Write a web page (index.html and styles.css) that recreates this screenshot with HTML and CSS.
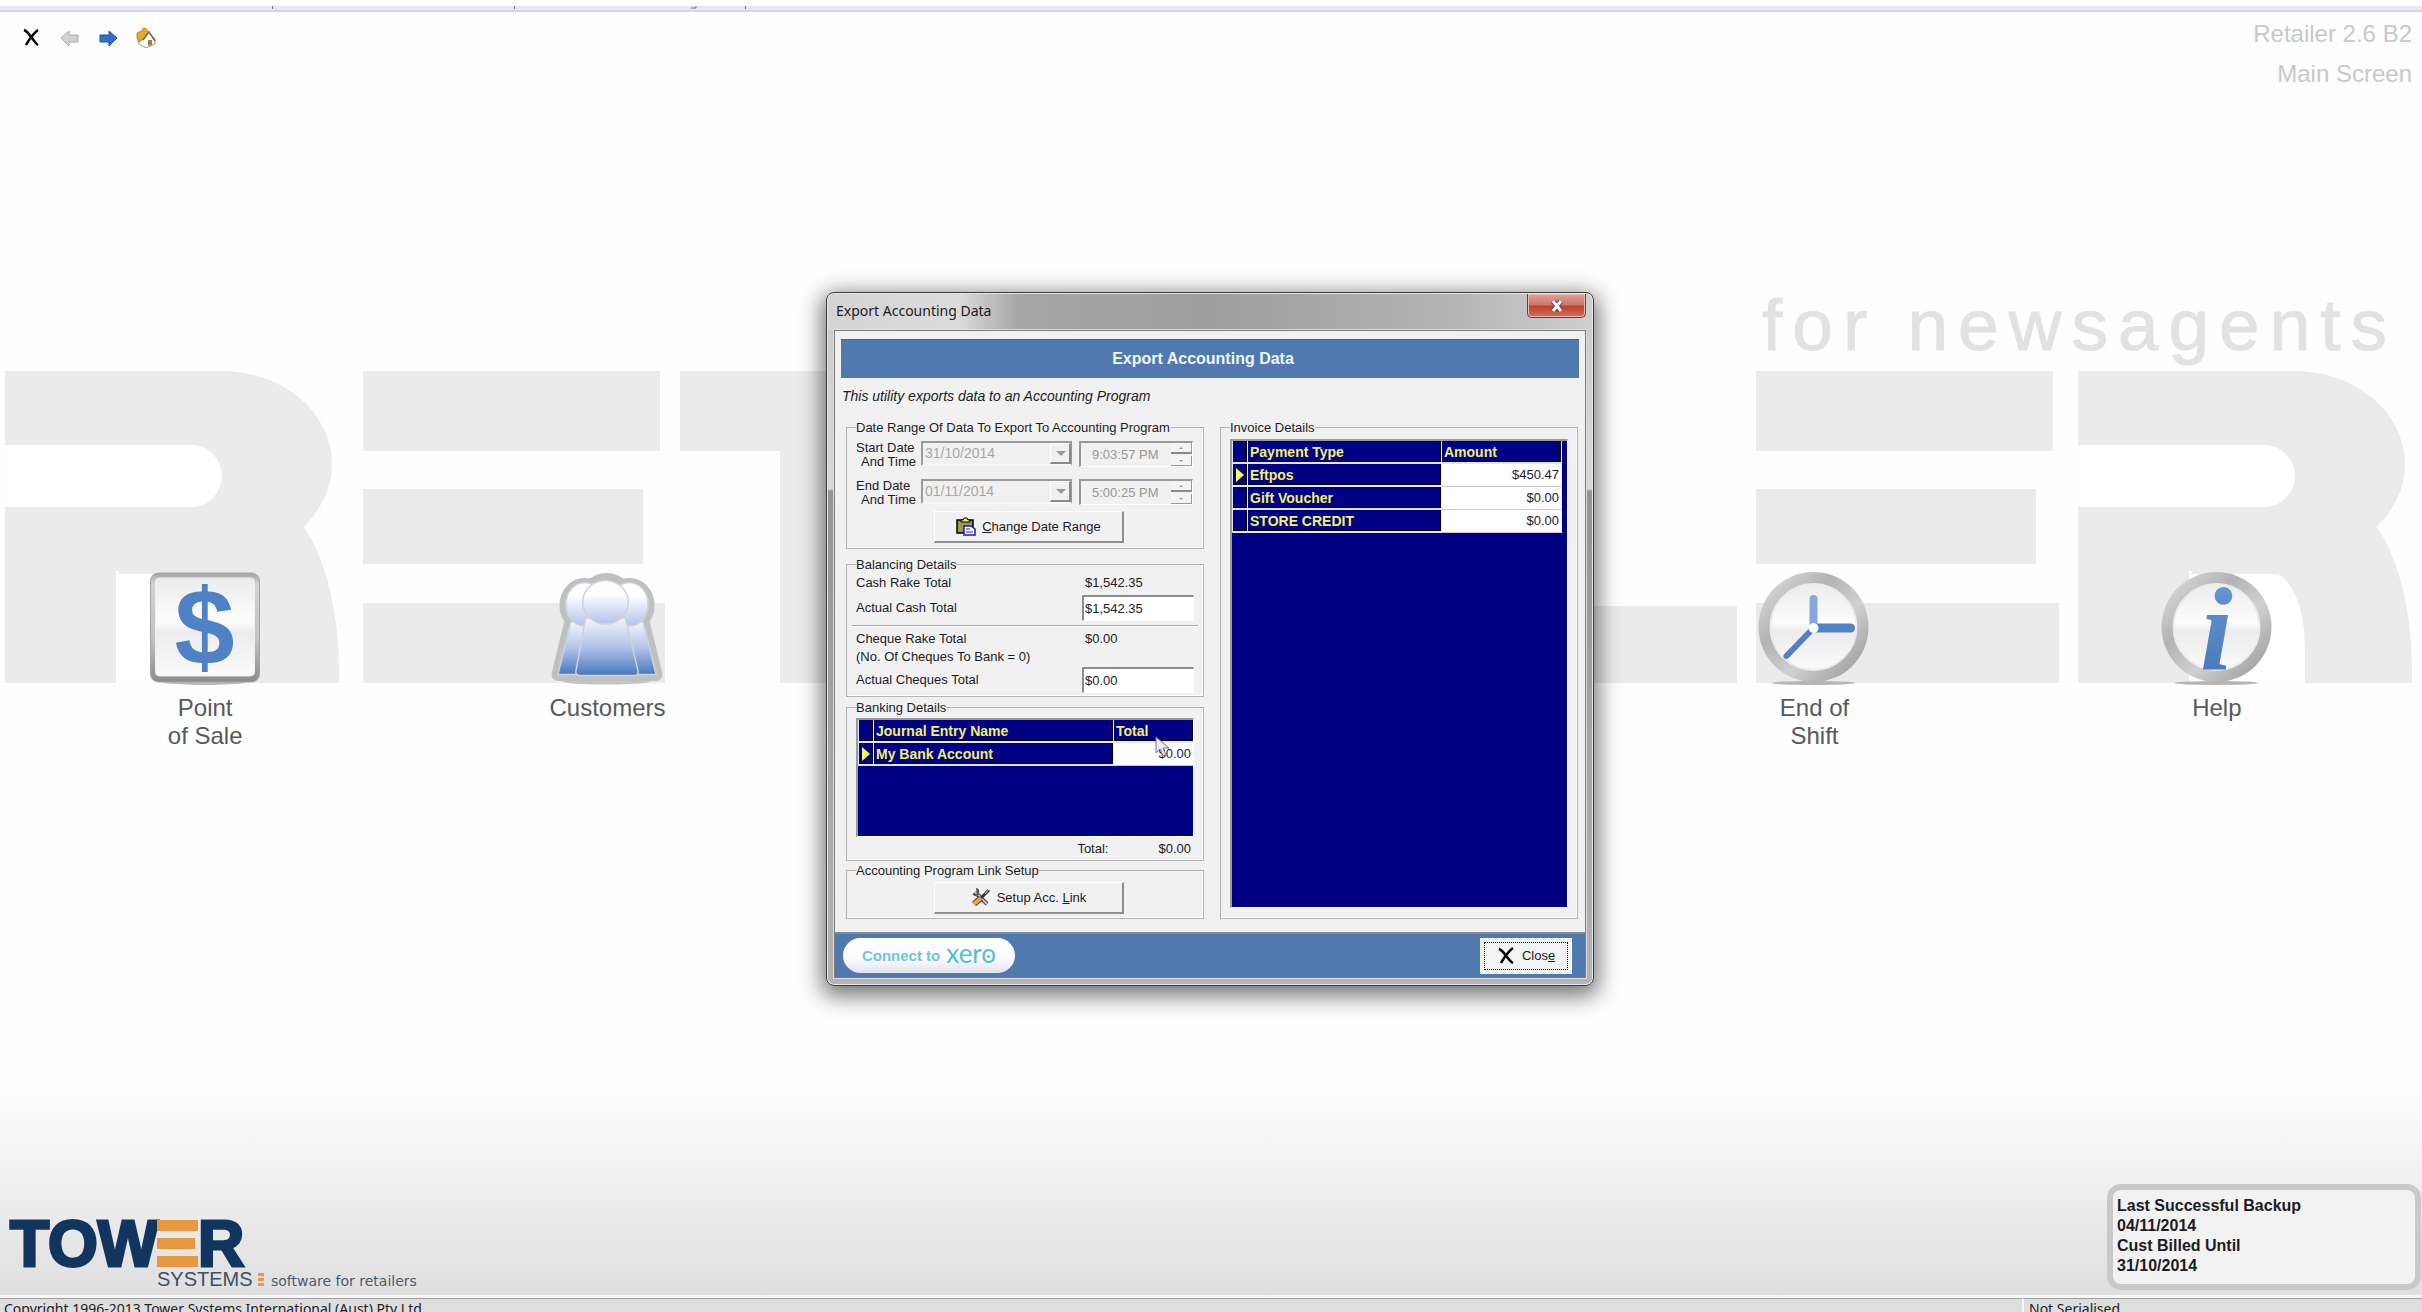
FILE: index.html
```html
<!DOCTYPE html>
<html lang="en">
<head>
    <meta charset="UTF-8">
    <meta name="viewport" content="width=device-width, initial-scale=1.0">
    <title>Retailer - Export Accounting Data</title>
    <link rel="stylesheet" href="styles.css">
</head>
<body>
    <div class="desktop">
        <!-- background branding -->
        <svg class="watermark" viewBox="0 0 2422 700" aria-hidden="true">
            <defs>
                <symbol id="brandR" viewBox="0 0 337 312">
                    <rect width="111" height="312" fill="#ebebeb"/>
                    <rect x="100" y="130" width="234" height="380" rx="75" ry="170" fill="#ebebeb"/>
                    <rect y="0" width="220" height="200" fill="#ebebeb"/>
                    <rect x="80" y="0" width="247" height="186" rx="110" ry="93" fill="#ebebeb"/>
                    <rect x="111" y="203" width="116" height="180" rx="32" ry="75" fill="#fff"/>
                    <rect x="111" y="203" width="60" height="109" fill="#fff"/>
                    <rect y="74" width="190" height="62" fill="#fff"/>
                    <rect x="120" y="74" width="97" height="62" rx="31" fill="#fff"/>
                </symbol>
            </defs>
            <g fill="#ebebeb">
                <use href="#brandR" x="5" y="371" width="337" height="312"/>
                <rect x="363" y="371" width="297" height="80"/>
                <rect x="363" y="489" width="280" height="75"/>
                <rect x="363" y="603" width="302" height="80"/>
                <rect x="680" y="371" width="300" height="80"/>
                <rect x="780" y="451" width="100" height="232"/>
                <rect x="1300" y="371" width="100" height="312"/>
                <rect x="1420" y="371" width="100" height="312"/>
                <rect x="1500" y="606" width="237" height="77"/>
                <rect x="1756" y="371" width="297" height="80"/>
                <rect x="1756" y="489" width="280" height="75"/>
                <rect x="1756" y="603" width="303" height="80"/>
                <use href="#brandR" x="2078" y="371" width="337" height="312"/>
            </g>
            <text class="tagline" x="1762" y="350">for newsagents</text>
        </svg>

        <div class="top-strip">
            <svg width="760" height="3" aria-hidden="true"><path d="M272.500 0v3M514.500 0v3M745.500 0v3M691 2h5V0" stroke="#777" fill="none"/></svg>
        </div>

        <header class="header">
            <nav class="toolbar">
                <button type="button" aria-label="Exit">
                    <svg viewBox="0 0 20 20"><path d="M2 2c3 1 5 4 8 8s4 6 6 7M16 2c-3 2-6 6-9 10-1 2-2 3-3 5" fill="none" stroke="#000" stroke-width="2.500"/></svg>
                </button>
                <button type="button" aria-label="Back">
                    <svg viewBox="0 0 20 20"><path d="M1 10l8-7v4h9v7H9v4z" fill="#d2d2d2" stroke="#aaa"/></svg>
                </button>
                <button type="button" aria-label="Forward">
                    <svg viewBox="0 0 20 20"><path d="M19 10l-8-7v4H2v7h9v4z" fill="#2f6fd0" stroke="#1c4fa5"/></svg>
                </button>
                <button type="button" aria-label="Home">
                    <svg viewBox="0 0 20 20">
                        <path d="M2 11l5-5 5-3 7 8v5l-9 4-7-4z" fill="#fff" stroke="#999"/>
                        <path d="M1 10V5l6-3V0h3v2l3 2-7 8-3 2z" fill="#e0aa26" stroke="#a87a18" stroke-width=".8"/>
                        <path d="M7 12l6-8 6 9" fill="none" stroke="#7b6a50" stroke-width="1.500"/>
                        <path d="M12 18v-6h4v5z" fill="#b07a2c"/>
                    </svg>
                </button>
            </nav>
            <div class="app-title">
                <div>Retailer 2.6 B2</div>
                <div>Main Screen</div>
            </div>
        </header>

        <main class="tiles">
            <a class="tile" href="#pos">
                <svg viewBox="0 0 111 114">
                    <defs>
                        <linearGradient id="metal" x1="0" y1="0" x2="0" y2="1"><stop offset="0" stop-color="#a4a4a4"/><stop offset=".1" stop-color="#d2d2d4"/><stop offset=".6" stop-color="#c2c3c5"/><stop offset="1" stop-color="#8a8b8d"/></linearGradient>
                        <linearGradient id="face" x1="0" y1="0" x2="0" y2="1"><stop offset="0" stop-color="#ececec"/><stop offset=".45" stop-color="#fdfdfd"/><stop offset=".55" stop-color="#ececee"/><stop offset="1" stop-color="#fbfbfb"/></linearGradient>
                        <linearGradient id="blue" x1="0" y1="0" x2="0" y2="1"><stop offset="0" stop-color="#6d9bd8"/><stop offset="1" stop-color="#4273b4"/></linearGradient>
                    </defs>
                    <ellipse cx="55" cy="110" rx="42" ry="3" fill="#bbb"/>
                    <rect x="1" y="1" width="109" height="109" rx="8" fill="url(#metal)" stroke="#a5a5a5"/>
                    <rect x="6" y="6" width="99" height="98" rx="4" fill="url(#face)" stroke="#eee"/>
                    <text class="dollar" x="55" y="92" text-anchor="middle" fill="#4f82c4">$</text>
                </svg>
                <span>Point<br>of Sale</span>
            </a>
            <a class="tile" href="#customers">
                <svg viewBox="0 0 113 114">
                    <defs>
                        <linearGradient id="head" x1="0" y1="0" x2="0" y2="1"><stop offset=".3" stop-color="#fff"/><stop offset="1" stop-color="#b4c2ea"/></linearGradient>
                        <linearGradient id="torso" x1="0" y1="0" x2="0" y2="1"><stop offset="0" stop-color="#f4f6fd"/><stop offset=".5" stop-color="#b3c2e8"/><stop offset="1" stop-color="#4579be"/></linearGradient>
                    </defs>
                    <ellipse cx="56" cy="110" rx="44" ry="3" fill="#c4c4c4"/>
                    <g stroke="#bfc0c2" stroke-width="13" fill="#c3c4c6" stroke-linejoin="round">
                        <ellipse cx="34" cy="33" rx="19" ry="21"/><ellipse cx="79" cy="33" rx="19" ry="21"/><ellipse cx="56" cy="30" rx="22" ry="23"/>
                        <path d="M20 50L7 103h99L93 50z"/>
                    </g>
                    <g stroke="#cfd2dc" stroke-width="1.500">
                        <path d="M20 50L7 103h50V50zM93 50l13 53H56V50z" fill="url(#torso)"/>
                        <ellipse cx="34" cy="32" rx="19" ry="22" fill="url(#head)"/>
                        <ellipse cx="79" cy="32" rx="19" ry="22" fill="url(#head)"/>
                        <path d="M35 46L25 100q0 4 4 4h55q4 0 4-4L75 46z" fill="url(#torso)"/>
                        <ellipse cx="55" cy="30" rx="23" ry="22" fill="url(#head)"/>
                    </g>
                </svg>
                <span>Customers</span>
            </a>
            <a class="tile tile-end" href="#shift">
                <svg viewBox="0 0 111 114">
                    <defs>
                        <linearGradient id="ring" x1="0" y1="0" x2="1" y2="1"><stop offset="0" stop-color="#e4e4e4"/><stop offset=".35" stop-color="#b2b3b5"/><stop offset=".6" stop-color="#cfd0d2"/><stop offset="1" stop-color="#8f9092"/></linearGradient>
                    </defs>
                    <ellipse cx="55" cy="111" rx="42" ry="2" fill="#b5b5b5"/>
                    <circle cx="55" cy="55" r="55" fill="url(#ring)"/>
                    <circle cx="55" cy="55" r="43" fill="url(#face)" stroke="#ececec" stroke-width="2"/>
                    <g stroke-linecap="round">
                        <path d="M55 56V27" stroke="#85a7de" stroke-width="8"/>
                        <path d="M55 56h37" stroke="#5182c6" stroke-width="9"/>
                        <path d="M55 56L28 84" stroke="#5182c6" stroke-width="6"/>
                    </g>
                    <circle cx="55" cy="56" r="5" fill="#fff"/>
                </svg>
                <span>End of<br>Shift</span>
            </a>
            <a class="tile" href="#help">
                <svg viewBox="0 0 111 114">
                    <ellipse cx="55" cy="111" rx="42" ry="2" fill="#b5b5b5"/>
                    <circle cx="55" cy="55" r="55" fill="url(#ring)"/>
                    <circle cx="55" cy="55" r="43" fill="url(#face)" stroke="#ececec" stroke-width="2"/>
                    <text class="info" x="55" y="97" text-anchor="middle" fill="url(#blue)">i</text>
                </svg>
                <span>Help</span>
            </a>
        </main>

        <footer class="footer">
            <svg class="tower-logo" width="420" height="75" viewBox="0 0 420 75" role="img" aria-label="Tower Systems">
                <text class="tower" x="10" y="51">TOW</text>
                <g fill="#ea983f">
                    <rect x="157" y="5" width="41" height="11"/><rect x="157" y="23" width="38" height="11"/><rect x="157" y="41" width="41" height="11"/>
                    <rect x="258" y="58" width="6" height="3"/><rect x="258" y="63" width="6" height="3"/><rect x="258" y="68" width="6" height="3"/>
                </g>
                <text class="tower" x="198" y="51">R</text>
                <text class="systems" x="157" y="71">SYSTEMS</text>
                <text class="slogan" x="271" y="71">software for retailers</text>
            </svg>
            <div class="backup">
                Last Successful Backup<br>
                04/11/2014<br>
                Cust Billed Until<br>
                31/10/2014
            </div>
        </footer>

        <div class="statusbar">
            <div class="status-left">Copyright 1996-2013 Tower Systems International (Aust) Pty Ltd</div>
            <div class="status-right">Not Serialised</div>
        </div>

        <div class="overlay">
            <section class="dialog" role="dialog" aria-labelledby="dialogTitle">
                <div class="titlebar">
                    <span id="dialogTitle">Export Accounting Data</span>
                    <button type="button" class="win-close" aria-label="Close window">
                        <svg width="14" height="12" viewBox="0 0 14 12"><path d="M3 1l8 10M11 1L3 11" stroke="#6b3a38" stroke-width="5"/><path d="M3 1l8 10M11 1L3 11" stroke="#fff" stroke-width="3"/></svg>
                    </button>
                </div>
                <form class="client">
                    <h1 class="banner">Export Accounting Data</h1>
                    <p class="intro">This utility exports data to an Accounting Program</p>

                    <div class="columns">
                        <div class="left">
                            <fieldset class="range">
                                <legend>Date Range Of Data To Export To Accounting Program</legend>
                                <div class="date-row">
                                    <label for="startDate">Start Date<span>And Time</span></label>
                                    <div class="combo">
                                        <select id="startDate" disabled><option>31/10/2014</option></select>
                                        <i class="drop"></i>
                                    </div>
                                    <div class="spinner">
                                        <input type="text" value="9:03:57 PM" aria-label="Start time" disabled>
                                        <div class="spin"><button type="button" aria-label="Later" disabled></button><button type="button" class="down" aria-label="Earlier" disabled></button></div>
                                    </div>
                                </div>
                                <div class="date-row">
                                    <label for="endDate">End Date<span>And Time</span></label>
                                    <div class="combo">
                                        <select id="endDate" disabled><option>01/11/2014</option></select>
                                        <i class="drop"></i>
                                    </div>
                                    <div class="spinner">
                                        <input type="text" value="5:00:25 PM" aria-label="End time" disabled>
                                        <div class="spin"><button type="button" aria-label="Later" disabled></button><button type="button" class="down" aria-label="Earlier" disabled></button></div>
                                    </div>
                                </div>
                                <button type="button" class="btn">
                                    <svg width="20" height="19" viewBox="0 0 20 19">
                                        <path d="M1 3h16v13H1z" fill="#9a9a50" stroke="#000" stroke-width="1.500"/>
                                        <path d="M5 5V3h2l1-2h3l1 2h2v2z" fill="#e8e87a" stroke="#000"/>
                                        <path d="M8 9h7l4 3v6H8z" fill="#fff" stroke="#1b1bb0" stroke-width="1.500"/>
                                        <path d="M10 12h4M10 15h7" stroke="#1b1bb0"/>
                                    </svg>
                                    <span><u>C</u>hange Date Range</span>
                                </button>
                            </fieldset>

                            <fieldset class="balancing">
                                <legend>Balancing Details</legend>
                                <div class="field"><span>Cash Rake Total</span><output>$1,542.35</output></div>
                                <div class="field entry"><label for="cash">Actual Cash Total</label><input id="cash" type="text" value="$1,542.35"></div>
                                <hr>
                                <div class="field"><span>Cheque Rake Total</span><output>$0.00</output></div>
                                <div class="field"><span>(No. Of Cheques To Bank = 0)</span></div>
                                <div class="field entry"><label for="cheques">Actual Cheques Total</label><input id="cheques" type="text" value="$0.00"></div>
                            </fieldset>

                            <fieldset class="banking">
                                <legend>Banking Details</legend>
                                <div class="grid-box">
                                    <table>
                                        <thead><tr><th class="mark"></th><th>Journal Entry Name</th><th class="sum">Total</th></tr></thead>
                                        <tbody><tr><th class="mark"><i class="pointer"></i></th><th>My Bank Account</th><td>$0.00</td></tr></tbody>
                                    </table>
                                    <svg class="cursor" width="16" height="22" viewBox="0 0 16 22"><path d="M1 1v16l4-4 3 7 3-1-3-7h6z" fill="#ececf4" stroke="#70708c"/></svg>
                                </div>
                                <div class="total"><span>Total:</span><output>$0.00</output></div>
                            </fieldset>

                            <fieldset class="setup">
                                <legend>Accounting Program Link Setup</legend>
                                <button type="button" class="btn">
                                    <svg width="20" height="19" viewBox="0 0 20 19">
                                        <path d="M4 4l12 12" stroke="#444" stroke-width="4"/><path d="M4 4l12 12" stroke="#c4c4c4" stroke-width="2"/>
                                        <path d="M2 6q4 3 5-1T5 1" fill="none" stroke="#555" stroke-width="2"/>
                                        <path d="M18 2l-8 8" stroke="#333" stroke-width="3"/><path d="M18 1l-4 5" stroke="#ddd"/>
                                        <path d="M10 10l-7 6" stroke="#5a3a14" stroke-width="6"/><path d="M10 10l-7 6" stroke="#eda653" stroke-width="4"/>
                                    </svg>
                                    <span>Setup Acc. <u>L</u>ink</span>
                                </button>
                            </fieldset>
                        </div>

                        <fieldset class="invoice">
                            <legend>Invoice Details</legend>
                            <div class="grid-box">
                                <table>
                                    <thead><tr><th class="mark"></th><th>Payment Type</th><th class="sum">Amount</th></tr></thead>
                                    <tbody>
                                        <tr><th class="mark"><i class="pointer"></i></th><th>Eftpos</th><td>$450.47</td></tr>
                                        <tr><th class="mark"></th><th>Gift Voucher</th><td>$0.00</td></tr>
                                        <tr><th class="mark"></th><th>STORE CREDIT</th><td>$0.00</td></tr>
                                    </tbody>
                                </table>
                            </div>
                        </fieldset>
                    </div>

                    <div class="actions">
                        <button type="button" class="xero-btn">Connect to <span class="xero">xero</span></button>
                        <button type="button" class="close-btn">
                            <span class="focus">
                                <svg width="18" height="18" viewBox="0 0 18 18"><path d="M2 2c3 1 5 4 8 8s4 5 6 6M16 1c-3 2-6 6-9 10-1 2-2 3-3 5" fill="none" stroke="#000" stroke-width="2.500"/></svg>
                                <span>Clos<u>e</u></span>
                            </span>
                        </button>
                    </div>
                </form>
            </section>
        </div>
    </div>
</body>
</html>
```
FILE: styles.css
```css
* {
    box-sizing: border-box;
}
body {
    margin: 0;
    background-color: #fefefe;
    color: #1c1c24;
    font-family: 'Liberation Sans', Arial, sans-serif;
    font-size: 13px;
}
button, input, select {
    font: inherit;
    color: inherit;
    margin: 0;
    padding: 0;
    border: none;
    border-radius: 0;
    background: none;
}
.desktop {
    position: relative;
    display: flex;
    flex-direction: column;
    min-height: 100vh;
    overflow: hidden;
}
.watermark {
    position: absolute;
    top: 0;
    left: 0;
    width: 100%;
}
.tagline {
    font-size: 73px;
    letter-spacing: 10px;
    fill: #e2e2e2;
    stroke: #e2e2e2;
    stroke-width: 1px;
}
.top-strip {
    position: relative;
    height: 12px;
    padding-top: 6px;
    background: linear-gradient(#fff 6px, #e4e7f1 6px, #e4e7f1 10px, #d4d7e1 10px);
}
.top-strip svg {
    display: block;
}

/* header */
.header {
    position: relative;
    display: flex;
    justify-content: space-between;
    height: 90px;
    padding: 2px 10px 0 22px;
}
.toolbar {
    display: flex;
    gap: 18px;
    padding-top: 14px;
}
.toolbar button {
    width: 20px;
    height: 20px;
}
.toolbar svg {
    display: block;
}
.app-title {
    font-size: 24px;
    line-height: 40px;
    text-align: right;
    color: #c8c8c8;
}

/* main screen shortcuts */
.tiles {
    position: relative;
    flex: 1;
    display: grid;
    grid-template-columns: repeat(6, 1fr);
    align-items: start;
    padding: 470px 4px 0;
}
.tile {
    display: flex;
    flex-direction: column;
    align-items: center;
    gap: 8px;
    font-size: 24px;
    line-height: 28px;
    text-align: center;
    text-decoration: none;
    color: #58595b;
}
.tile svg {
    width: 112px;
    height: 114px;
    overflow: visible;
}
.tile-end {
    grid-column: 5;
}
.dollar {
    font-size: 108px;
    font-weight: bold;
}
.info {
    font-family: 'Liberation Serif', 'Times New Roman', serif;
    font-size: 118px;
    font-weight: bold;
    font-style: italic;
}

/* footer */
.footer {
    position: relative;
    display: flex;
    justify-content: space-between;
    align-items: flex-end;
    height: 210px;
    padding: 0 1px 5px 0;
    background: linear-gradient(#fefefe, #dfdfdf);
}
.tower-logo {
    overflow: visible;
}
.tower {
    font-size: 64px;
    font-weight: bold;
    fill: #12355f;
    stroke: #12355f;
    stroke-width: 3px;
}
.systems {
    font-size: 20px;
    fill: #3f4f68;
}
.slogan {
    font-family: 'DejaVu Sans', Verdana, sans-serif;
    font-size: 14px;
    fill: #4d5a6c;
}
.backup {
    width: 314px;
    height: 106px;
    padding: 6px 4px;
    border: 6px solid #c9c9c9;
    border-radius: 14px;
    background-color: #f2f2f2;
    font-size: 16px;
    font-weight: bold;
    line-height: 20px;
}
.statusbar {
    position: relative;
    display: flex;
    height: 17px;
    overflow: hidden;
    border-top: 3px solid #f6f6f6;
    background-color: #dedede;
    font-family: 'Noto Sans', 'Open Sans', sans-serif;
    font-size: 14px;
    line-height: 20px;
}
.status-left {
    flex: 1;
    padding-left: 4px;
    border-top: 1px solid #a0a0a0;
}
.status-right {
    width: 400px;
    padding-left: 5px;
    border-top: 1px solid #a0a0a0;
    border-left: 2px solid #f6f6f6;
}

/* dialog window */
.overlay {
    position: absolute;
    inset: 0;
    display: flex;
    align-items: center;
    justify-content: center;
    padding: 0 2px 34px 0;
}
.dialog {
    width: 768px;
    padding: 0 7px 7px;
    border: 1px solid #3a3a3a;
    border-radius: 8px;
    background: linear-gradient(#cdcdcd 37px, #d8d8d8 196px, #949494 198px, #b4b4b4);
    box-shadow: inset 0 0 0 1px #e8e8e8, 0 6px 22px 4px rgba(0, 0, 0, 0.55);
}
.titlebar {
    display: flex;
    justify-content: space-between;
    align-items: flex-start;
    height: 36px;
    margin: 1px -6px 0;
    padding-left: 8px;
    border-radius: 7px 7px 0 0;
    background: linear-gradient(90deg, #d4d4d4, #dcdcdc 130px, #a6a6a6 190px, #9e9e9e 50%, #b2b2b2 80%, #cfcfcf);
    font-family: 'Noto Sans', 'Open Sans', sans-serif;
    font-size: 14px;
    line-height: 34px;
}
.win-close {
    display: flex;
    align-items: center;
    justify-content: center;
    width: 59px;
    height: 24px;
    margin-right: 6px;
    border: 1px solid #6a3a36;
    border-top: none;
    border-radius: 0 0 5px 5px;
    background: linear-gradient(#dfa198, #cf7566 48%, #b8402c 52%, #d2705c);
    box-shadow: inset 0 0 0 1px #e9bbb3;
}
.client {
    border: 1px solid #7d7d7d;
    background-color: #f1f1f1;
    box-shadow: 0 0 0 1px #dcdcdc;
}
.banner {
    height: 39px;
    margin: 8px 6px;
    padding-right: 14px;
    border-top: 1px solid #45648f;
    background-color: #507aaf;
    color: #eef6ff;
    font-size: 16px;
    line-height: 37px;
    text-align: center;
}
.intro {
    margin: 0 7px 14px;
    font-size: 14px;
    font-style: italic;
    line-height: 20px;
}
.columns {
    display: grid;
    grid-template-columns: 1fr 1fr;
    gap: 16px;
    padding: 0 7px 13px 11px;
}
fieldset {
    min-width: 0;
    margin: 0;
    padding: 4px 9px;
    border: 1px solid #b4b4b4;
    box-shadow: inset -1px -1px 0 #fff;
}
legend {
    padding: 0;
    line-height: 15px;
}
.range {
    padding: 6px 9px 5px;
    margin-bottom: 8px;
}
.date-row {
    display: flex;
    align-items: flex-start;
    height: 26px;
    margin-bottom: 12px;
}
.date-row + .date-row {
    margin-bottom: 6px;
}
.date-row label {
    width: 60px;
    margin-right: 5px;
    line-height: 14px;
}
.date-row label span {
    display: block;
    text-align: right;
}
.combo {
    position: relative;
    width: 151px;
    height: 25px;
    margin-right: 7px;
    border: 2px solid #9a9a9a;
    border-right-width: 1px;
    border-bottom-color: #f8f8f8;
}
.combo select {
    width: 100%;
    height: 20px;
    padding-left: 2px;
    appearance: none;
    font-size: 14px;
    color: #a8a8a8;
    opacity: 1;
}
.drop {
    position: absolute;
    top: 0;
    right: 0;
    width: 21px;
    height: 21px;
    border: 1px solid #fff;
    border-right: 2px solid #8a8a8a;
    border-bottom: 2px solid #8a8a8a;
    background-color: #f1f1f1;
    pointer-events: none;
}
.drop::after {
    content: '';
    position: absolute;
    top: 7px;
    left: 5px;
    border: 5px solid transparent;
    border-top-color: #999;
    border-bottom: none;
}
.spinner {
    display: flex;
    width: 114px;
    height: 26px;
    padding: 0 0 0 11px;
    border: 2px solid #9a9a9a;
    border-right: 1px solid #fff;
    border-bottom: 1px solid #fff;
}
.spinner input {
    flex: 1;
    width: 70px;
    color: #979797;
}
.spin {
    display: flex;
    flex-direction: column;
    gap: 2px;
    width: 21px;
}
.spin button {
    display: flex;
    align-items: center;
    justify-content: center;
    flex: 1;
    border-right: 1px solid #9a9a9a;
    border-bottom: 2px solid #8a8a8a;
    background-color: #f4f4f4;
}
.spin button::after {
    content: '';
    border: 2px solid transparent;
    border-bottom-color: #999;
    border-top: none;
}
.spin .down {
    border-bottom: 1px solid #9a9a9a;
}
.spin .down::after {
    border-top: 2px solid #999;
    border-bottom: none;
}
.btn {
    display: flex;
    align-items: center;
    justify-content: center;
    gap: 6px;
    width: 190px;
    height: 32px;
    margin: 0 70px 0 auto;
    border: 1px solid #fff;
    border-right: 2px solid #8e8e8e;
    border-bottom: 2px solid #8e8e8e;
    background-color: #f1f1f1;
}

/* balancing */
.balancing {
    padding: 3px 9px;
    margin-bottom: 3px;
}
.field {
    display: grid;
    grid-template-columns: 226px 1fr;
    align-items: center;
    height: 16px;
    margin-bottom: 2px;
    line-height: 16px;
}
.field output {
    padding-left: 3px;
}
.field.entry {
    height: 26px;
    margin: 0;
}
.field input {
    width: 100%;
    height: 26px;
    padding: 0 1px;
    border: 2px solid #8c8c8c;
    border-right: 1px solid #fff;
    border-bottom: 1px solid #fff;
    background-color: #fff;
}
.field:first-of-type {
    margin-bottom: 4px;
}
hr {
    height: 2px;
    margin: 4px -4px;
    border: none;
    border-top: 1px solid #a8a8a8;
    background-color: #fff;
}

/* data grids */
.banking {
    padding: 3px 9px;
    margin-bottom: 2px;
}
.banking .grid-box {
    height: 119px;
}
.grid-box {
    position: relative;
    border: 2px solid #9a9a9a;
    border-right: 1px solid #fff;
    border-bottom: 1px solid #fff;
    background-color: #000083;
}
table {
    width: 100%;
    table-layout: fixed;
    border-collapse: separate;
    border-spacing: 0;
}
tr {
    height: 23px;
}
th, td {
    padding: 0 2px;
    border-left: 1px solid #e4e4f4;
    border-bottom: 2px solid #e4e4f4;
    line-height: 16px;
}
th {
    font-size: 14px;
    text-align: left;
    color: #f2f06c;
    box-shadow: inset -1px -1px 0 #000;
}
td {
    text-align: right;
    background-color: #fff;
    border-bottom: 1px solid #ccc;
}
.mark {
    width: 15px;
    padding: 0;
}
.sum {
    width: 80px;
}
.pointer {
    display: block;
    width: 0;
    margin-left: 3px;
    border: 7px solid transparent;
    border-left: 8px solid #ffff4a;
    border-right: none;
}
.cursor {
    position: absolute;
    top: 16px;
    left: 297px;
}
.total {
    display: flex;
    justify-content: flex-end;
    gap: 50px;
    margin-top: 4px;
    padding-right: 3px;
    line-height: 16px;
}
.invoice {
    display: flex;
    padding: 4px 9px 10px;
}
.invoice .grid-box {
    flex: 1;
}
.invoice table {
    width: calc(100% - 5px);
    border-right: 1px solid #e4e4f4;
}
.invoice .sum {
    width: 120px;
}

/* bottom bar */
.actions {
    display: flex;
    justify-content: space-between;
    align-items: center;
    height: 45px;
    padding: 0 13px 0 8px;
    border-top: 2px solid #7e8a99;
    background-color: #507aaf;
}
.xero-btn {
    display: flex;
    align-items: center;
    justify-content: center;
    gap: 6px;
    width: 172px;
    height: 35px;
    border-radius: 18px;
    background: linear-gradient(#fff, #fbfbfd 60%, #dfe4ee);
    color: #71c5dc;
    font-size: 15px;
    font-weight: bold;
}
.xero {
    position: relative;
    padding-bottom: 6px;
    color: #55bddb;
    font-family: Lato, sans-serif;
    font-size: 26px;
    font-weight: normal;
    line-height: 28px;
}
.xero::after {
    content: '';
    position: absolute;
    right: 6px;
    bottom: 15px;
    width: 3px;
    height: 3px;
    border-radius: 50%;
    background-color: #55bddb;
}
.close-btn {
    width: 92px;
    height: 36px;
    padding: 3px;
    border: 1px solid #fff;
    background-color: #f3f3f3;
}
.focus {
    display: flex;
    align-items: center;
    justify-content: center;
    gap: 7px;
    height: 28px;
    border: 1px dotted #000;
}
```
